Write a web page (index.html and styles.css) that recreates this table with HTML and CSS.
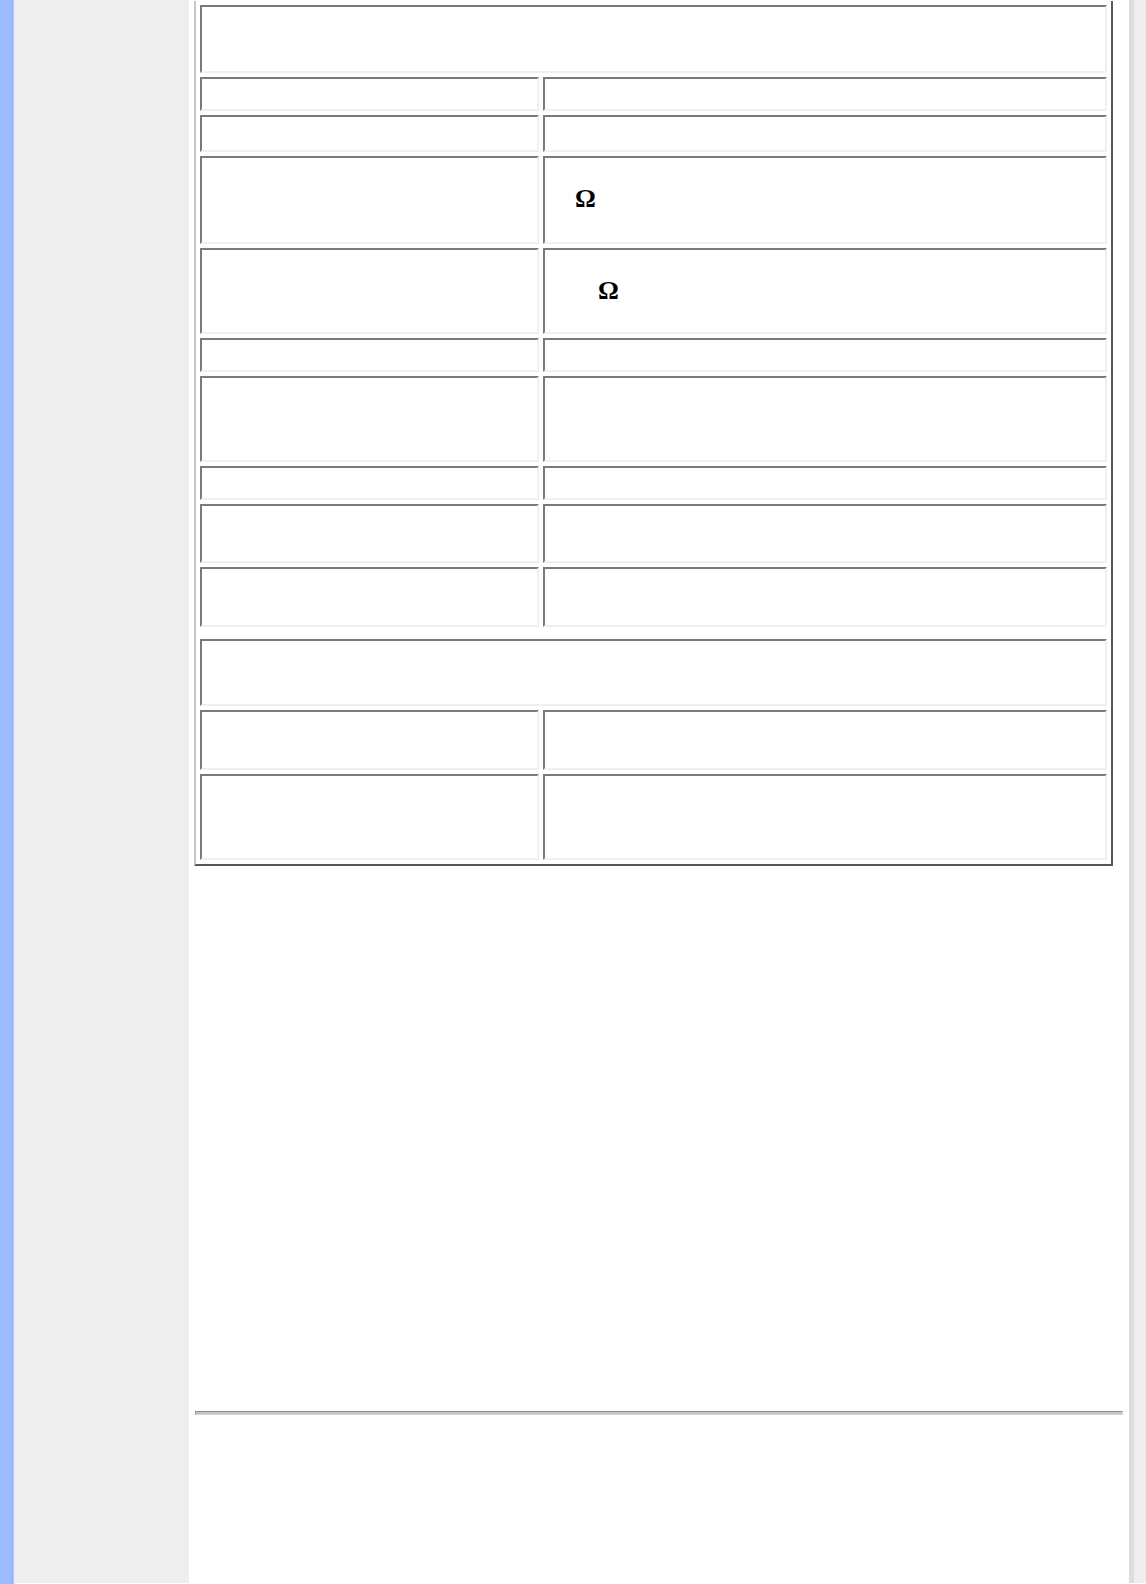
FILE: index.html
```html
<!DOCTYPE html>
<html lang="en">
<head>
<meta charset="utf-8">
<title>Specifications</title>
<link rel="stylesheet" href="styles.css">
</head>
<body>
<div class="page">
  <div class="rail"></div>
  <nav class="side"></nav>
  <main class="content">
    <table class="spec">
      <tr><td colspan="2"><div class="box wide h64"></div></td></tr>
      <tr><td><div class="box left h30"></div></td><td><div class="box right h30"></div></td></tr>
      <tr><td><div class="box left h33"></div></td><td><div class="box right h33"></div></td></tr>
      <tr><td><div class="box left h84"></div></td><td><div class="box right h84 ohm-line"><span class="ohm ohm-a">Ω</span></div></td></tr>
      <tr><td><div class="box left h82"></div></td><td><div class="box right h82 ohm-line"><span class="ohm ohm-b">Ω</span></div></td></tr>
      <tr><td><div class="box left h30"></div></td><td><div class="box right h30"></div></td></tr>
      <tr><td><div class="box left h82"></div></td><td><div class="box right h82"></div></td></tr>
      <tr><td><div class="box left h30"></div></td><td><div class="box right h30"></div></td></tr>
      <tr><td><div class="box left h55"></div></td><td><div class="box right h55"></div></td></tr>
      <tr><td><div class="box left h56"></div></td><td><div class="box right h56"></div></td></tr>
      <tr class="gap"><td colspan="2"><div class="box wide h4"></div></td></tr>
      <tr><td colspan="2"><div class="box wide h63"></div></td></tr>
      <tr><td><div class="box left h56"></div></td><td><div class="box right h56"></div></td></tr>
      <tr><td><div class="box left h82"></div></td><td><div class="box right h82"></div></td></tr>
    </table>
    <hr class="rule">
  </main>
  <div class="edge"></div>
</div>
</body>
</html>
```
FILE: styles.css
```css
html, body {
  margin: 0;
  padding: 0;
}
body {
  width: 1146px;
  height: 1584px;
  overflow: hidden;
  font-family: "Liberation Serif", "Times New Roman", serif;
  background: linear-gradient(to right, #9bbcff 0, #9bbcff 12px, #8eabf3 12px, #8eabf3 13px, #bdd0f8 13px, #bdd0f8 14px, #e4eaf6 14px, #e4eaf6 15px, #ffffff 15px);
}
.page {
  display: flex;
  height: 1583px;
}
.rail {
  width: 15px;
  flex: none;
}
.side {
  width: 174px;
  flex: none;
  background: #eeeeee;
}
.content {
  width: 940px;
  flex: none;
  background: #ffffff;
  padding: 1px 0 0 5px;
  box-sizing: border-box;
}
.edge {
  flex: 1;
  background: linear-gradient(to right, #dddddd 0, #dddddd 5px, #eeeeee 5px);
}
.spec {
  border-collapse: separate;
  border-spacing: 4px;
  border-style: solid;
  border-width: 0 2px 2px 2px;
  border-color: #c6c6c6 #585858 #585858 #c6c6c6;
}
.spec td {
  padding: 0;
  vertical-align: top;
  border-style: solid;
  border-width: 2px;
  border-color: #7a7a7a #f0f0ec #f0f0ec #7a7a7a;
}
.spec .gap td {
  border: none;
}
.box {
  box-sizing: border-box;
}
.left { width: 335px; }
.right { width: 560px; }
.wide { width: 903px; }
.h4 { height: 4px; }
.h30 { height: 30px; }
.h33 { height: 33px; }
.h55 { height: 55px; }
.h56 { height: 56px; }
.h63 { height: 63px; }
.h64 { height: 64px; }
.h82 { height: 82px; }
.h84 { height: 84px; }
.ohm-line {
  padding-top: 28px;
  line-height: 26px;
}
.ohm {
  font-family: "Liberation Serif", "Times New Roman", serif;
  font-weight: bold;
  font-size: 26px;
  color: #000000;
}
.ohm-a { margin-left: 30px; }
.ohm-b { margin-left: 53px; }
.rule {
  box-sizing: border-box;
  width: 928px;
  height: 4px;
  margin: 545px 0 0 1px;
  border-style: solid;
  border-width: 1px;
  border-color: #8f8f8f #d6d6d6 #d6d6d6 #8f8f8f;
  background: #c6c6c6;
}
```
